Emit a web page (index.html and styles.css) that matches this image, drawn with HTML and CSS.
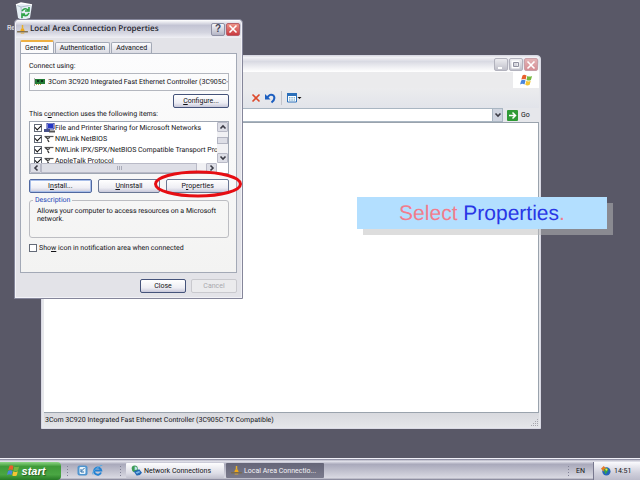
FILE: index.html
```
<!DOCTYPE html>
<html lang="en">
<head>
<meta charset="utf-8">
<title>Local Area Connection Properties</title>
<link rel="stylesheet" href="styles.css">
</head>
<body>
<svg class="defs" aria-hidden="true">
  <symbol id="flag" viewBox="0 0 16 15">
    <path fill="#e8602c" d="M3 2Q5 0 8 2L7 7Q4.500 5.500 1.500 7Z"/>
    <path fill="#76b83f" d="M9 2.500Q12 4 15 2.500L13.500 7.500Q11 9 8 7.500Z"/>
    <path fill="#4a86dc" d="M1.300 8Q4 6.500 6.800 8L5.500 13Q3 11.500 0 13Z"/>
    <path fill="#f4c433" d="M7.800 8.500Q10.500 10 13.300 8.500L12 13.500Q9 15 6.500 13.500Z"/>
  </symbol>
  <symbol id="plug" viewBox="0 0 12 10">
    <path d="M5.200 0h1.600v4H5.200z" fill="#e8b22c"/>
    <path d="M4.500 4h3l1 3h-5z" fill="#f0a818"/>
    <path d="M0 7.500h12" stroke="#7a6a4a" stroke-width="1.500"/>
    <path d="M4 9h4" stroke="#d8a030"/>
  </symbol>
  <symbol id="proto" viewBox="0 0 10 8">
    <path d="M0 1.500h9" stroke="#555" stroke-width="1.200"/>
    <path d="M1 2l2 1.500L5.500 2.500M3 4.500l1.500 2.500" fill="none" stroke="#333" stroke-width="1.300"/>
  </symbol>
  <symbol id="chev-down" viewBox="0 0 8 8"><path d="M1.500 2.500L4 5l2.500-2.500" fill="none" stroke="#3c3c46" stroke-width="1.600"/></symbol>
  <symbol id="chev-up" viewBox="0 0 8 8"><path d="M1.500 5.500L4 3l2.500 2.500" fill="none" stroke="#3c3c46" stroke-width="1.600"/></symbol>
  <symbol id="chev-left" viewBox="0 0 8 8"><path d="M5.500 1.500L3 4l2.500 2.500" fill="none" stroke="#3c3c46" stroke-width="1.600"/></symbol>
  <symbol id="chev-right" viewBox="0 0 8 8"><path d="M2.500 1.500L5 4L2.500 6.500" fill="none" stroke="#3c3c46" stroke-width="1.600"/></symbol>
  <symbol id="cross" viewBox="0 0 10 10"><path d="M1.500 1.500l7 7M8.500 1.500l-7 7" stroke="currentColor" stroke-width="1.600"/></symbol>
  <symbol id="globe" viewBox="0 0 12 12">
    <path d="M1 2Q4-1 7 2L8 6L3 8Q0 6 1 2Z" fill="#3d9c58"/>
    <path d="M4 1.500Q7 2 7 5L4 5.500Z" fill="#bfe3ee"/>
    <path d="M3 7l6-2.500 3 4Q10 12 6 11.500Z" fill="#2468b4"/>
    <path d="M5 8l4-1.500 1 1.500-3.500 1.500z" fill="#7dbbe8"/>
  </symbol>
</svg>

<main class="desktop">
  <div class="recycle">
    <svg width="18" height="18" viewBox="0 0 18 18" aria-hidden="true">
      <path d="M1 3l5-2 11 2-2 13-8 2-4-2z" fill="#e4eef4"/>
      <path d="M1 3l5 2 11-2M6 5l1 13" fill="none" stroke="#aebdca"/>
      <path d="M1 3l5-2 11 2" fill="none" stroke="#fff" stroke-width="1.500"/>
      <path d="M7 9q3-4 6-1M14 5v4h-4M14 11q-2 4-6 2M7 16v-4h3" fill="none" stroke="#2fa348" stroke-width="1.600"/>
    </svg>
    <span>Recycle</span>
  </div>

  <section class="explorer" aria-label="Network Connections">
    <header class="explorer-title">
      <button class="cap dim" aria-label="Minimize"><svg width="12" height="12" viewBox="0 0 12 12"><path d="M3 9h4" stroke="#fff" stroke-width="2"/></svg></button>
      <button class="cap dim" aria-label="Maximize"><svg width="12" height="11" viewBox="0 0 12 11"><path d="M2.500 2.500h6v6h-6z" fill="none" stroke="#fff" stroke-width="2"/><path d="M3.500 3.500h5v4h-5z" fill="none" stroke="#9091a0"/></svg></button>
      <button class="cap dim red" aria-label="Close"><svg width="10" height="10"><use href="#cross"/></svg></button>
    </header>
    <div class="menu-row"><span class="brand"><svg width="13" height="12"><use href="#flag"/></svg></span></div>
    <div class="tools">
      <button class="tool" aria-label="Delete"><svg class="del" width="10" height="10"><use href="#cross"/></svg></button>
      <button class="tool" aria-label="Undo"><svg width="11" height="11" viewBox="0 0 11 11"><path d="M2 5Q5 0 8.500 2.500Q11 6 6.500 9.500" fill="none" stroke="#1d5fc0" stroke-width="2"/><path d="M0 1v5.500h5.500z" fill="#1d5fc0"/></svg></button>
      <span class="rule"></span>
      <button class="tool" aria-label="Views"><svg width="15" height="10" viewBox="0 0 15 10"><path d="M.5.500h9v8.500h-9z" fill="#fff" stroke="#2c70ba"/><path d="M0 0h10v3H0z" fill="#2c70ba"/><path d="M2 4.800h6M2 7h6" stroke="#4d91bd" stroke-dasharray="1.500 .8"/><path d="M10.500 4h4l-2 2z" fill="#111"/></svg></button>
    </div>
    <div class="address">
      <input type="text" aria-label="Address">
      <button class="drop" aria-label="Show addresses"><svg width="8" height="8"><use href="#chev-down"/></svg></button>
      <button class="go"><svg width="11" height="11" viewBox="0 0 11 11"><rect width="11" height="11" rx="1" fill="#2f9a35"/><path d="M2 5.500h6M5.500 2.500l3 3-3 3" fill="none" stroke="#fff" stroke-width="1.500"/></svg>Go</button>
    </div>
    <div class="view"></div>
    <footer class="status"><span>3Com 3C920 Integrated Fast Ethernet Controller (3C905C-TX Compatible)</span>
      <svg width="9" height="9" viewBox="0 0 9 9" aria-hidden="true"><path d="M7.500 1v8M5.500 3v6M3.500 5v4M1.500 7v2" stroke="#a6a6ae" stroke-width="1" stroke-dasharray="1 1"/></svg>
    </footer>
  </section>

  <section class="dialog" role="dialog" aria-labelledby="dlg-title">
    <header class="dialog-title">
      <svg width="11" height="9" aria-hidden="true"><use href="#plug"/></svg>
      <h1 id="dlg-title">Local Area Connection Properties</h1>
      <button class="cap help" aria-label="Help">?</button>
      <button class="cap red" aria-label="Close dialog"><svg width="10" height="10"><use href="#cross"/></svg></button>
    </header>
    <nav class="tabs" role="tablist">
      <button class="tab active" role="tab" aria-selected="true">General</button>
      <button class="tab" role="tab">Authentication</button>
      <button class="tab" role="tab">Advanced</button>
    </nav>
    <div class="sheet">
      <p class="caption">Connect using:</p>
      <div class="adapter">
        <svg width="11" height="8" viewBox="0 0 11 8" aria-hidden="true"><path d="M0 0v8" stroke="#999" stroke-width="1.500"/><path d="M1 1h10v5H1z" fill="#237a35"/><path d="M3 2h2v2H3zM7 2h2v2H7z" fill="#0a2f16"/><path d="M2 6.500h6" stroke="#b5a33a" stroke-dasharray="1 1"/></svg>
        <span>3Com 3C920 Integrated Fast Ethernet Controller (3C905C-</span>
      </div>
      <div class="configure"><button class="btn dark"><span><u>C</u>onfigure...</span></button></div>
      <p class="caption items-cap">This c<u>o</u>nnection uses the following items:</p>
      <div class="list">
        <ul>
          <li><label><input type="checkbox" checked><svg width="11" height="10" viewBox="0 0 11 10"><path d="M3 0h7v6H3z" fill="#ccd5f5" stroke="#2830a0"/><path d="M4 1h5v4H4z" fill="#2636c4"/><path d="M0 6h6v3H0z" fill="#46508a"/><path d="M5 8.500h6" stroke="#555" stroke-width="2"/></svg>File and Printer Sharing for Microsoft Networks</label></li>
          <li><label><input type="checkbox" checked><svg width="11" height="8"><use href="#proto"/></svg>NWLink NetBIOS</label></li>
          <li><label><input type="checkbox" checked><svg width="11" height="8"><use href="#proto"/></svg>NWLink IPX/SPX/NetBIOS Compatible Transport Prot</label></li>
          <li><label><input type="checkbox" checked><svg width="11" height="8"><use href="#proto"/></svg>AppleTalk Protocol</label></li>
        </ul>
        <div class="vbar">
          <button aria-label="Scroll up"><svg width="8" height="8"><use href="#chev-up"/></svg></button>
          <span class="thumb"></span>
          <button aria-label="Scroll down"><svg width="8" height="8"><use href="#chev-down"/></svg></button>
        </div>
        <div class="hbar">
          <button aria-label="Scroll left"><svg width="8" height="8"><use href="#chev-left"/></svg></button>
          <span class="thumb"></span>
          <button aria-label="Scroll right"><svg width="8" height="8"><use href="#chev-right"/></svg></button>
        </div>
      </div>
      <div class="actions">
        <button class="btn focus"><span>I<u>n</u>stall...</span></button>
        <button class="btn"><span><u>U</u>ninstall</span></button>
        <button class="btn"><span>P<u>r</u>operties</span></button>
      </div>
      <fieldset>
        <legend>Description</legend>
        <p>Allows your computer to access resources on a Microsoft network.</p>
      </fieldset>
      <label class="notify"><input type="checkbox"><span>Sho<u>w</u> icon in notification area when connected</span></label>
    </div>
    <footer class="dialog-buttons">
      <button class="btn dark">Close</button>
      <button class="btn" disabled>Cancel</button>
    </footer>
    <svg class="ring" width="90" height="28" viewBox="0 0 90 28" aria-hidden="true"><ellipse cx="45" cy="14" rx="42.500" ry="12" fill="none" stroke="#e60d12" stroke-width="3"/></svg>
  </section>

  <aside class="callout">Select <b>Properties</b>.</aside>
</main>

<footer class="taskbar">
  <button class="start"><svg width="13" height="13"><use href="#flag"/></svg>start</button>
  <div class="quick">
    <span class="grip"></span>
    <button aria-label="Show desktop"><svg width="11" height="11" viewBox="0 0 11 11"><rect x=".5" y=".5" width="10" height="10" rx="2" fill="#4f94cf"/><rect x="2.500" y="2" width="6" height="7" rx="1" fill="#e8f3fa"/><path d="M4 6.500l3.500-3.500M4 4v3h3" fill="none" stroke="#2c6ca8"/></svg></button>
    <button aria-label="Internet Explorer"><svg width="11" height="11" viewBox="0 0 11 11"><path d="M9 7.500A3.600 3.600 0 1 1 9.200 5.500H3" fill="none" stroke="#2382d3" stroke-width="2"/><path d="M1 9.500Q-.5 7 5 3T10 1" fill="none" stroke="#55a9e3"/></svg></button>
    <span class="grip end"></span>
  </div>
  <button class="task"><svg width="11" height="11"><use href="#globe"/></svg>Network Connections</button>
  <button class="task pressed"><svg width="11" height="9"><use href="#plug"/></svg>Local Area Connectio...</button>
  <div class="lang"><span class="grip"></span>EN</div>
  <div class="tray">
    <svg width="11" height="11" viewBox="0 0 12 12" aria-hidden="true"><circle cx="7" cy="7" r="4.500" fill="#2465b8"/><path d="M1 4l3-3 3 3-3 3z" fill="#e57a25"/><path d="M4 5l4-2 1 3-3 4z" fill="#35a64b"/><circle cx="7" cy="5" r="1.200" fill="#f2da45"/></svg>
    <time>14:51</time>
  </div>
</footer>
</body>
</html>
```
FILE: styles.css
```
* { box-sizing: border-box; }

body {
  margin: 0;
  min-height: 100vh;
  display: flex;
  flex-direction: column;
  overflow: hidden;
  background: #595867;
  color: #121216;
  font: 7px/8px Roboto, "Liberation Sans", sans-serif;
  text-rendering: geometricPrecision;
}

button, input { font: inherit; color: inherit; margin: 0; }
button { padding: 0; border: 0; background: none; display: flex; align-items: center; justify-content: center; white-space: nowrap; }
svg { flex: none; }
p, ul, h1 { margin: 0; padding: 0; }
.defs { position: absolute; width: 0; height: 0; }

.desktop { position: relative; flex: 1; }

.recycle { position: absolute; left: 7px; top: 2px; display: flex; flex-direction: column; gap: 4px; color: #fff; }
.recycle svg { margin-left: 8px; }

/* Explorer window */
.explorer {
  position: absolute;
  left: 41px;
  top: 55px;
  width: 500px;
  height: 374px;
  display: flex;
  flex-direction: column;
  padding: 1px 1px 1px 2px;
  border: 1px solid #d9d9e4;
  border-radius: 4px 4px 0 0;
  background: #e6e7eb;
}
.explorer-title {
  height: 15px;
  display: flex;
  align-items: center;
  justify-content: flex-end;
  gap: 1px;
  padding-right: 1px;
  background: linear-gradient(#f4f4f8, #d9dae3 30%, #f3f3f6 75%, #fff);
}
.cap {
  width: 14px;
  height: 13px;
  border: 1px solid #8e8fa3;
  border-radius: 2px;
  background: linear-gradient(#f4f4f8, #b5b6c6);
}
.cap.red { color: #fff; border-color: #b8606a; background: linear-gradient(#ee9386, #c93a40); }
.cap.dim { border-color: #b2b2bd; background: linear-gradient(#ececf0, #c0c0ca); }
.cap.dim.red { border-color: #c9a0a8; background: linear-gradient(#e4b4b6, #d68e94); }
.menu-row { height: 16px; display: flex; justify-content: flex-end; background: #ebebed; }
.brand { width: 26px; display: flex; align-items: center; justify-content: center; background: #fff; }
.tools {
  height: 20px;
  display: flex;
  align-items: center;
  gap: 4px;
  padding-left: 207px;
  background: linear-gradient(#ececee, #e2e4ea);
}
.del { color: #dd4a2c; }
.rule { width: 1px; height: 14px; margin: 0 1px; background: #c3c4cb; }
.address { height: 14px; display: flex; align-items: center; }
.address input { flex: 1; min-width: 0; height: 14px; padding: 0 4px; border: 1px solid #a9b6c2; border-right: 0; background: #fff; }
.drop { width: 11px; height: 14px; border: 1px solid #a9b6c2; background: #cfd4df; }
.go { width: 36px; gap: 3px; justify-content: flex-start; padding-left: 4px; }
.view { flex: 1; background: #fff; border: 1px solid #9aa3ad; border-left: 0; }
.status { height: 14px; display: flex; align-items: center; justify-content: space-between; padding-left: 1px; background: linear-gradient(#d8d9de, #e4e5e9); }
.status svg { align-self: flex-end; }

/* Properties dialog */
.dialog {
  position: absolute;
  left: 14px;
  top: 19px;
  width: 229px;
  display: flex;
  flex-direction: column;
  padding: 0 5px 5px;
  border: 1px solid #85869a;
  border-radius: 4px 4px 0 0;
  background: #e3e3e8;
  box-shadow: inset 0 0 0 1px #f2f2f7;
}
.dialog-title {
  height: 18px;
  display: flex;
  align-items: center;
  gap: 1px;
  margin: 0 -4px;
  padding: 0 1px;
  border-radius: 3px 3px 0 0;
  background: linear-gradient(#fff, #c3c4d4 30%, #d4d5e0 70%, #f0f0f5);
}
.dialog-title h1 { flex: 1; padding-left: 1px; font: 600 8px/12px "Open Sans", sans-serif; color: #25252c; white-space: nowrap; }
.help { font: bold 10px/10px "Liberation Sans", sans-serif; color: #444457; }
.tabs { display: flex; align-items: flex-end; gap: 1px; height: 14px; margin-top: 1px; }
.tab { height: 11px; padding: 0 4px; border: 1px solid #a3a9b6; border-bottom: 0; border-radius: 2px 2px 0 0; background: linear-gradient(#fafafc, #dadbe3); }
.tab.active { height: 13px; border-top: 2px solid #eeb043; background: #fbfbfc; }
.sheet {
  display: flex;
  flex-direction: column;
  height: 220px;
  padding: 8px 7px 0 8px;
  border: 1px solid #a3a9b6;
  background: linear-gradient(#fcfcfd, #f3f3f2);
}
.adapter { height: 18px; display: flex; align-items: center; gap: 3px; margin-top: 3px; padding-left: 4px; border: 1px solid #b4b7bf; white-space: nowrap; overflow: hidden; }
.configure { display: flex; justify-content: flex-end; margin-top: 3px; }
.configure .btn { width: 56px; }
.btn {
  height: 14px;
  border: 1px solid #6b7894;
  border-radius: 2px;
  background: linear-gradient(#fff, #eeeef4 65%, #c8c8da);
}
.btn.focus { border-color: #5068a0; box-shadow: inset 0 0 0 1px #a9bfe9; }
.btn.dark { border-color: #45537a; }
.btn:disabled { color: #a8a8ad; border-color: #c9c9ce; background: #ebebed; }
.items-cap { margin-top: 2px; }
.list {
  display: grid;
  grid-template: 41px 10px / 1fr 11px;
  margin-top: 3px;
  border: 1px solid #a0a7b3;
  background: #fff;
}
.list ul { list-style: none; overflow: hidden; min-width: 0; padding-left: 4px; }
.list li { height: 11px; white-space: nowrap; }
.list label { display: flex; align-items: center; height: 11px; }
.list label svg { margin: 0 0 0 2px; }
input[type="checkbox"] { appearance: none; flex: none; width: 8px; height: 8px; border: 1px solid #646b78; background: #fff; }
input[type="checkbox"]:checked { display: grid; place-items: center; }
input[type="checkbox"]:checked::before { content: ""; width: 5px; height: 3px; margin-top: -1px; border: solid #111; border-width: 0 0 1px 1px; transform: rotate(-45deg); }
.vbar { display: flex; flex-direction: column; background: #f1f1f4; }
.vbar button, .hbar button { width: 11px; height: 10px; border: 1px solid #b9bac7; border-radius: 1px; background: #dddee6; }
.vbar .thumb { height: 7px; margin: 5px 0 auto; border: 1px solid #b3b5c2; background: #dddee6; }
.hbar { display: flex; background: #f1f1f4; }
.hbar .thumb { flex: 1; margin-right: 9px; border: 1px solid #b9bac7; background: repeating-linear-gradient(90deg, #a9abb8 0 1px, #dddee6 1px 2px) center / 5px 4px no-repeat, #dddee6; }
.actions { display: grid; grid-template-columns: repeat(3, 1fr); gap: 6px; margin-top: 5px; }
fieldset { min-width: 0; height: 42px; margin: 3px 0 0; padding: 0 7px; border: 1px solid #bcbdc2; border-radius: 3px; }
legend { margin-left: -4px; padding: 0 2px; color: #2446b8; }
fieldset p { margin-top: 3px; }
.notify { display: flex; align-items: center; gap: 2px; margin-top: 6px; }
.dialog-buttons { display: flex; justify-content: flex-end; gap: 5px; padding-top: 6px; }
.dialog-buttons .btn { width: 46px; }
.ring { position: absolute; left: 138px; top: 150px; pointer-events: none; }

/* Instruction balloon */
.callout {
  position: absolute;
  left: 357px;
  top: 197px;
  width: 250px;
  height: 32px;
  display: flex;
  align-items: center;
  justify-content: center;
  padding-top: 2px;
  white-space: pre;
  background: #b3dfff;
  box-shadow: 6px 6px 0 rgba(188, 188, 188, .5);
  color: #f27c8c;
  font: 21px/24px "Liberation Sans", Arial, sans-serif;
}
.callout b { font-weight: normal; color: #2937e6; }

/* Taskbar */
.taskbar {
  height: 22px;
  display: flex;
  align-items: center;
  padding-top: 2px;
  border-top: 1px solid #f0f0f8;
  background: linear-gradient(#77778e, #e6e6ee 10%, #a9a9bb 25%, #c3c3d0 60%, #d9d9e2 90%, #77778c);
}
.start {
  width: 61px;
  height: 18px;
  gap: 2px;
  padding-right: 9px;
  border-radius: 0 4px 4px 0;
  background: linear-gradient(#8ed685, #3f9b39 25%, #4aa643 70%, #267a26);
  color: #fff;
  font: italic bold 11px/14px "Liberation Sans", sans-serif;
  text-shadow: 1px 1px 1px #245c22;
}
.quick { width: 65px; display: flex; align-items: center; gap: 8px; padding-left: 5px; }
.quick button { margin-right: -4px; }
.grip { width: 3px; height: 12px; background: radial-gradient(circle, #808094 1px, transparent 1px) 0 0 / 3px 3px; }
.grip.end { margin-left: auto; margin-right: 4px; }
.task { width: 98px; height: 15px; justify-content: flex-start; gap: 2px; margin-right: 2px; padding-left: 5px; border-radius: 1px; background: linear-gradient(#fdfdfe, #dcdce5 70%, #c3c3d0); }
.task.pressed { color: #f4f4f8; background: linear-gradient(#656578, #7a7a8c); }
.lang { display: flex; align-items: center; gap: 6px; margin-left: auto; margin-right: 8px; }
.tray { width: 47px; height: 18px; display: flex; align-items: center; gap: 3px; padding-left: 6px; border-left: 1px solid #77778e; background: linear-gradient(#fafafd, #d0d0dc 60%, #bcbccb); }
```
